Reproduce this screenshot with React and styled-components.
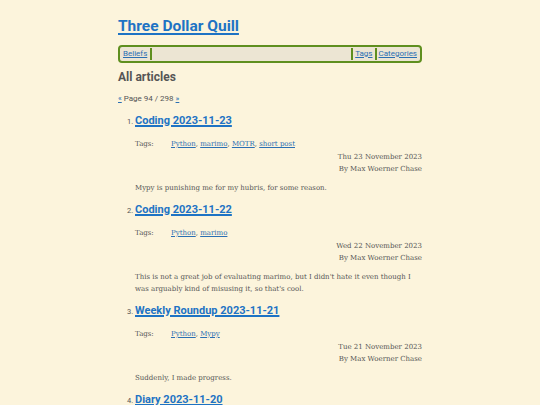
import React from "react";
import styled, { createGlobalStyle } from "styled-components";

const GlobalStyle = createGlobalStyle`
  html, body {
    margin: 0;
    padding: 0;
    background: #fcf4dc;
  }
  body {
    font-family: "DejaVu Serif", serif;
    color: #666;
  }
`;

const articles = [
  {
    title: "Coding 2023-11-23",
    tags: ["Python", "marimo", "MOTR", "short post"],
    date: "Thu 23 November 2023",
    summary: "Mypy is punishing me for my hubris, for some reason.",
  },
  {
    title: "Coding 2023-11-22",
    tags: ["Python", "marimo"],
    date: "Wed 22 November 2023",
    summary:
      "This is not a great job of evaluating marimo, but I didn't hate it even though I was arguably kind of misusing it, so that's cool.",
  },
  {
    title: "Weekly Roundup 2023-11-21",
    tags: ["Python", "Mypy"],
    date: "Tue 21 November 2023",
    summary: "Suddenly, I made progress.",
  },
  {
    title: "Diary 2023-11-20",
    tags: ["Diary"],
    date: "Mon 20 November 2023",
    summary: "",
  },
];

function App() {
  return (
    <>
      <GlobalStyle />
      <Page>
        <SiteTitle href="#">Three Dollar Quill</SiteTitle>
        <Nav>
          <NavLink href="#">Beliefs</NavLink>
          <NavSpacer />
          <NavLink href="#" divided>Tags</NavLink>
          <NavLink href="#" divided>Categories</NavLink>
        </Nav>
        <Heading>All articles</Heading>
        <Pager>
          <SmallLink href="#">«</SmallLink> Page 94 / 298{" "}
          <SmallLink href="#">»</SmallLink>
        </Pager>
        <List>
          {articles.map((a) => (
            <Item key={a.title}>
              <ItemTitle href="#">{a.title}</ItemTitle>
              <TagRow>
                <TagLabel>Tags:</TagLabel>
                <span>
                  {a.tags.map((t, i) => (
                    <React.Fragment key={t}>
                      <SmallLink href="#">{t}</SmallLink>
                      {i < a.tags.length - 1 ? ", " : ""}
                    </React.Fragment>
                  ))}
                </span>
              </TagRow>
              <Meta>
                <div>{a.date}</div>
                <div>By Max Woerner Chase</div>
              </Meta>
              <Summary>{a.summary}</Summary>
            </Item>
          ))}
        </List>
      </Page>
    </>
  );
}

export default App;

const Page = styled.div`
  width: 304px;
  margin: 0 auto;
  padding-top: 15px;
`;

const SiteTitle = styled.a`
  display: inline-block;
  font-family: Roboto, sans-serif;
  font-weight: 700;
  font-size: 15.5px;
  line-height: 22px;
  color: #1e73c4;
  text-decoration: underline;
  text-decoration-thickness: 2px;
  text-underline-offset: 2px;
`;

const Nav = styled.nav`
  display: flex;
  align-items: center;
  margin-top: 8px;
  height: 12px;
  padding: 1px 1px;
  border: 2px solid #5f8f1f;
  border-radius: 4px;
  background: #ece5d3;
  font-family: Roboto, sans-serif;
  font-size: 8px;
`;

const NavSpacer = styled.div`
  flex: 1;
  align-self: stretch;
  border-left: 2px solid #5f8f1f;
  margin-left: 1px;
`;

const NavLink = styled.a`
  color: #2a6fb3;
  padding: 0 2px;
  line-height: 12px;
  border-left: ${(p) => (p.divided ? "2px solid #5f8f1f" : "none")};
`;

const Heading = styled.h2`
  margin: 6px 0 0;
  font-family: Roboto, sans-serif;
  font-weight: 700;
  font-size: 12px;
  line-height: 16px;
  color: #555;
`;

const Pager = styled.div`
  margin-top: 9px;
  font-family: Roboto, sans-serif;
  font-size: 8px;
  line-height: 10px;
  color: #555;
`;

const SmallLink = styled.a`
  color: #2a6fb3;
`;

const List = styled.ol`
  margin: 8px 0 0;
  padding-left: 17px;
  font-family: Roboto, sans-serif;
  font-size: 7.5px;
  color: #555;
`;

const Item = styled.li`
  margin-bottom: 7px;
`;

const ItemTitle = styled.a`
  font-family: Roboto, sans-serif;
  font-weight: 700;
  font-size: 11px;
  line-height: 18px;
  color: #1e73c4;
  text-decoration-thickness: 1.5px;
`;

const TagRow = styled.div`
  display: flex;
  margin-top: 8px;
  font-family: "DejaVu Serif", serif;
  font-size: 7px;
  line-height: 12px;
`;

const TagLabel = styled.span`
  width: 36px;
`;

const Meta = styled.div`
  margin-top: 1px;
  text-align: right;
  font-family: "DejaVu Serif", serif;
  font-size: 7px;
  line-height: 12px;
`;

const Summary = styled.p`
  margin: 7px 0 0;
  font-family: "DejaVu Serif", serif;
  font-size: 7px;
  line-height: 12px;
`;
